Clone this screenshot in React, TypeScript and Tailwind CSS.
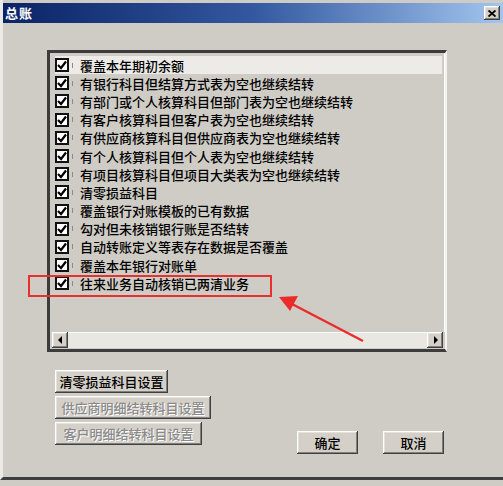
import React from "react";

const items = [
  "覆盖本年期初余额",
  "有银行科目但结算方式表为空也继续结转",
  "有部门或个人核算科目但部门表为空也继续结转",
  "有客户核算科目但客户表为空也继续结转",
  "有供应商核算科目但供应商表为空也继续结转",
  "有个人核算科目但个人表为空也继续结转",
  "有项目核算科目但项目大类表为空也继续结转",
  "清零损益科目",
  "覆盖银行对账模板的已有数据",
  "勾对但未核销银行账是否结转",
  "自动转账定义等表存在数据是否覆盖",
  "覆盖本年银行对账单",
  "往来业务自动核销已两清业务",
];

const font = "font-['SimSun','Noto_Sans_CJK_SC',sans-serif]";
const bevel =
  "bg-[#d4d0c8] shadow-[inset_-1px_-1px_#404040,inset_1px_1px_#ffffff,inset_-2px_-2px_#808080,inset_2px_2px_#e4e2dc]";

function Check() {
  return (
    <span className="w-[14px] h-[14px] shrink-0 bg-white border-2 border-[#111] flex items-center justify-center">
      <svg width="10" height="10" viewBox="0 0 10 10">
        <path d="M1 5 L4 8 L9 1.5" fill="none" stroke="#000" strokeWidth="2.2" />
      </svg>
    </span>
  );
}

function Btn({ label, w, disabled }: { label: string; w: number; disabled?: boolean }) {
  return (
    <div
      className={`${bevel} h-[23px] flex items-center justify-center text-[13px] font-medium ${
        disabled ? "text-[#8a8a8a] [text-shadow:1px_1px_#ffffff]" : "text-black"
      }`}
      style={{ width: w }}
    >
      {label}
    </div>
  );
}

export default function App() {
  return (
    <div className={`relative w-[503px] h-[486px] bg-[#cfccc5] overflow-hidden ${font}`}>
      <div className="h-[480px] border-l-[3px] border-l-[#eceae6] border-b-[3px] border-b-[#3e3e3e] flex flex-col">
        {/* title bar */}
        <div className="mt-[3px] h-[20px] bg-gradient-to-r from-[#0b2366] via-[#34589f] to-[#a3c6ee] flex items-center justify-between pl-[2px] pr-[3px]">
          <span className="text-white font-bold text-[13px] tracking-[1px]">总账</span>
          <span className={`${bevel} w-[16px] h-[14px] flex items-center justify-center`}>
            <svg width="8" height="7" viewBox="0 0 8 7">
              <path d="M0.5 0.5 L7.5 6.5 M7.5 0.5 L0.5 6.5" stroke="#000" strokeWidth="1.8" />
            </svg>
          </span>
        </div>

        {/* list box */}
        <div className="ml-[44px] mt-[27px] w-[400px] h-[302px] border-t-[3px] border-l-[3px] border-[#3c3c3c] border-r-2 border-r-[#f4f3f0] border-b-[3px] border-b-[#3c3c3c] flex flex-col">
          <div className="flex-1 flex flex-col pt-[3px] pl-[5px] pr-[2px] border-r border-r-[#ffffff]">
            {items.map((t, i) => (
              <div
                key={t}
                className={`h-[18.2px] flex items-center text-[13px] leading-none font-medium text-black ${
                  i === 0 ? "bg-[#ecebe7]" : ""
                }`}
              >
                <Check />
                <span className="w-px h-[5px] bg-[#8a8a8a] ml-[3px] mr-[7px]" />
                <span className="whitespace-nowrap">{t}</span>
              </div>
            ))}
          </div>
          {/* horizontal scrollbar */}
          <div className="h-[16px] mx-[2px] mb-[1px] flex bg-[#e9e7e2]">
            <span className={`${bevel} w-[16px] h-[16px] flex items-center justify-center`}>
              <svg width="5" height="8" viewBox="0 0 5 8">
                <path d="M4 0 L0 4 L4 8 Z" fill="#000" />
              </svg>
            </span>
            <span className="flex-1 border-t border-t-[#fafafa]" />
            <span className={`${bevel} w-[16px] h-[16px] flex items-center justify-center`}>
              <svg width="5" height="8" viewBox="0 0 5 8">
                <path d="M1 0 L5 4 L1 8 Z" fill="#000" />
              </svg>
            </span>
          </div>
        </div>

        {/* buttons */}
        <div className="flex items-start ml-[52px] mt-[18px]">
          <div className="flex flex-col gap-[3px] w-[156px]">
            <Btn label="清零损益科目设置" w={113} />
            <Btn label="供应商明细结转科目设置" w={156} disabled />
            <Btn label="客户明细结转科目设置" w={147} disabled />
          </div>
          <div className="flex gap-[25px] ml-[86px] mt-[61px]">
            <Btn label="确定" w={61} />
            <Btn label="取消" w={61} />
          </div>
        </div>
      </div>

      {/* annotation */}
      <div className="absolute left-[28px] top-[275px] w-[244px] h-[22px] border-2 border-[#e8312f]" />
      <svg className="absolute left-0 top-0 pointer-events-none" width="503" height="486">
        <line x1="363" y1="341" x2="292" y2="304" stroke="#ea2d2b" strokeWidth="2.5" />
        <path d="M279 297 L298 296 L290 311 Z" fill="#ea2d2b" />
      </svg>
    </div>
  );
}
